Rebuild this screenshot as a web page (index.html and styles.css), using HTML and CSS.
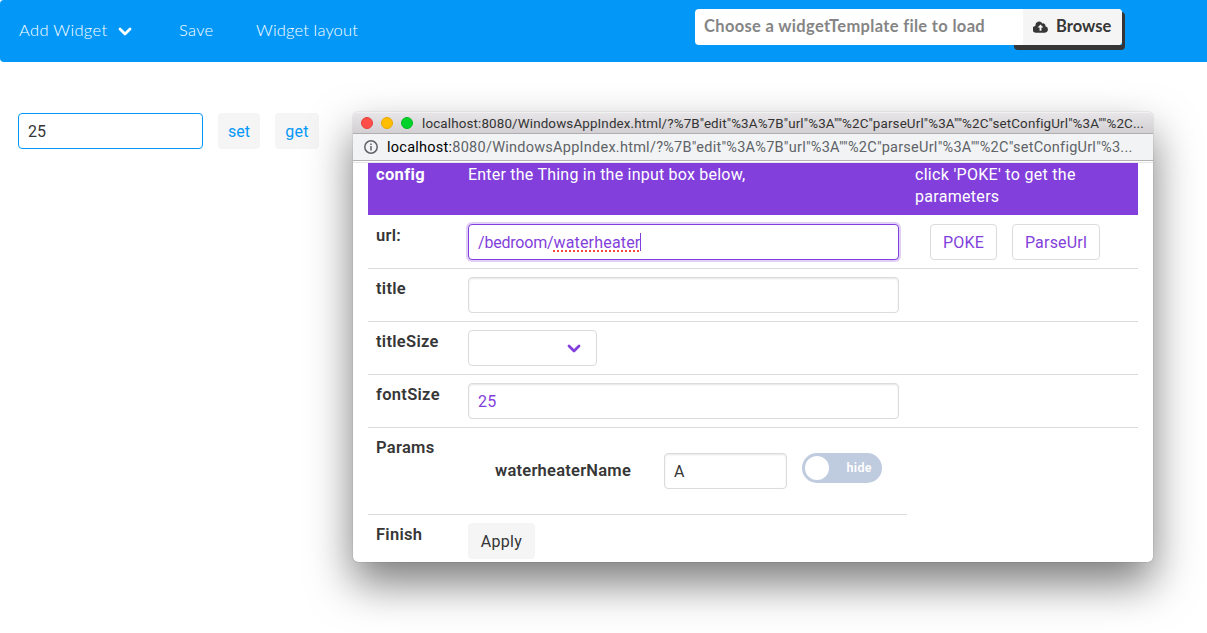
FILE: index.html
```html
<!DOCTYPE html>
<html lang="en">
<head>
<meta charset="utf-8">
<title>Widget layout</title>
<link rel="stylesheet" href="styles.css">
</head>
<body>
<nav class="navbar">
  <div class="menu">
    <a class="item add"><span>Add Widget</span><svg class="chevron" viewBox="0 0 14 9"><path d="M2 2l5 5 5-5"/></svg></a>
    <a class="item save">Save</a>
    <a class="item layout">Widget layout</a>
  </div>
  <div class="file">
    <span class="file-name">Choose a widgetTemplate file to load</span>
    <span class="file-cta">
      <svg class="cloud" viewBox="0 0 16 12"><path fill-rule="evenodd" d="M13.2 5.1A2.5 2.5 0 0 0 10 2.2 4 4 0 0 0 2.6 4.8 3.6 3.6 0 0 0 3.6 12H12.7A3.5 3.5 0 0 0 13.2 5.1ZM8 3.4L11.1 6.6H9V10H7V6.6H4.9Z"/></svg>
      <span class="browse">Browse</span>
    </span>
  </div>
</nav>
<main class="widget">
  <div class="input value">25</div>
  <div class="button set">set</div>
  <div class="button get">get</div>
</main>
<section class="window">
  <header class="titlebar">
    <i class="light red"></i><i class="light yellow"></i><i class="light green"></i>
    <span class="title">localhost:8080/WindowsAppIndex.html/?%7B"edit"%3A%7B"url"%3A""%2C"parseUrl"%3A""%2C"setConfigUrl"%3A""%2C...</span>
  </header>
  <div class="address">
    <svg class="info" viewBox="0 0 14 14"><circle cx="7" cy="7" r="6.2"/><path d="M7 6v4.4M7 3.4v1.6"/></svg>
    <span class="url"><b>localhost:</b>8080/WindowsAppIndex.html/?%7B"edit"%3A%7B"url"%3A""%2C"parseUrl"%3A""%2C"setConfigUrl"%3...</span>
  </div>
  <div class="form">
    <div class="row head"><strong>config</strong><span class="intro">Enter the Thing in the input box below,</span><span class="hint">click 'POKE' to get the<br>parameters</span></div>
    <div class="row"><strong>url:</strong><div class="cell"><div class="input focus"><span class="path">/bedroom/<span class="misspelt">waterheater</span></span><i class="caret"></i></div></div><div class="actions"><div class="button outline poke">POKE</div><div class="button outline parse">ParseUrl</div></div></div>
    <div class="row"><strong>title</strong><div class="cell"><div class="input"></div></div></div>
    <div class="row"><strong>titleSize</strong><div class="cell"><div class="select"><svg class="chevron" viewBox="0 0 14 9"><path d="M2 2l5 5 5-5"/></svg></div></div></div>
    <div class="row"><strong>fontSize</strong><div class="cell"><div class="input violet">25</div></div></div>
    <div class="row params"><strong>Params</strong><div class="param"><strong class="name">waterheaterName</strong><div class="input short">A</div><div class="switch"><i class="knob"></i><span>hide</span></div></div></div>
    <div class="row finish"><strong>Finish</strong><div class="cell"><div class="button apply">Apply</div></div></div>
  </div>
</section>
</body>
</html>
```
FILE: styles.css
```css
* { box-sizing: border-box; }
body { margin: 0; height: 633px; overflow: hidden; position: relative; background: #fff; color: #363636; font: 16px/24px Roboto, "Liberation Sans", sans-serif; }
.navbar { height: 62px; display: flex; align-items: flex-start; justify-content: space-between; padding: 0 85px 0 19px; background: #0398f7; border-radius: 4px 0 0 4px; font-family: Lato, sans-serif; }
.menu { display: flex; height: 60px; align-items: center; color: #fff; font-size: 16.5px; font-weight: 300; letter-spacing: .15px; }
.item { display: flex; align-items: center; white-space: nowrap; }
.add { width: 160px; gap: 11px; letter-spacing: .34px; }
.add .chevron { position: relative; top: 1px; }
.save { width: 77px; letter-spacing: .3px; }
.chevron { width: 14px; height: 9px; fill: none; stroke: currentColor; stroke-width: 2.8; stroke-linecap: round; stroke-linejoin: round; }
.file { display: flex; width: 427px; height: 36px; margin-top: 9px; border-radius: 4px; background: #fff; font-size: 16.5px; font-weight: 700; line-height: 34px; white-space: nowrap; }
.file-name { flex: 1; padding-left: 9px; color: #858585; letter-spacing: .33px; }
.file-cta { position: relative; display: flex; align-items: center; width: 99px; padding-left: 10px; gap: 8px; background: #f5f5f5; border-radius: 0 4px 4px 0; letter-spacing: .05px; }
.file-cta::before { content: ""; position: absolute; left: -9px; right: -3px; top: 3px; bottom: -5px; background: #363636; border-radius: 4px; clip-path: polygon(0 33px, 108px 33px, 108px 0, 111px 0, 111px 100%, 0 100%); }
.cloud { width: 15px; height: 12px; fill: #363636; }
.browse { color: #363636; padding-bottom: 2px; }
.widget { display: flex; gap: 15px; padding: 51px 18px; }
.input { height: 36px; border: 1px solid #dbdbdb; border-radius: 4px; padding: 0 9px; line-height: 35px; background: #fff; box-shadow: inset 0 1px 2px rgba(10,10,10,.1); white-space: nowrap; }
.value { width: 185px; border-color: #0398f7; box-shadow: none; }
.button { height: 36px; border-radius: 4px; background: #f5f5f5; line-height: 37px; text-align: center; }
.set { width: 42px; color: #0398f7; }
.get { width: 44px; color: #0398f7; letter-spacing: .3px; }
.window { position: absolute; left: 353px; top: 112px; width: 800px; height: 450px; background: #fff; border-radius: 5px; box-shadow: 0 0 1px rgba(0,0,0,.5), 0 21px 44px rgba(0,0,0,.52); }
.titlebar { display: flex; align-items: center; height: 22px; padding-left: 8px; gap: 8px; border-radius: 5px 5px 0 0; background: linear-gradient(#e8e5e8, #d3d0d3); border-bottom: 1px solid #afadaf; border-top: 1px solid #f2f1f2; }
.light { width: 12px; height: 12px; border-radius: 50%; border: 1px solid; flex: none; }
.red { background: #ff4e48; border-color: #e6403b; }
.yellow { background: #ffbe02; border-color: #e6a800; }
.green { background: #02d32a; border-color: #02ba22; }
.title { margin-left: 1px; padding-top: 2px; font-size: 13.4px; line-height: 20px; letter-spacing: .14px; color: #333; white-space: nowrap; }
.address { display: flex; align-items: center; height: 27px; padding-left: 11px; gap: 9px; background: #f1f3f4; border-bottom: 1px solid #b3b3b3; }
.info { width: 14px; height: 14px; fill: none; stroke: #5f6368; stroke-width: 1.5; flex: none; }
.url { padding-top: 2px; font-size: 14.5px; letter-spacing: .25px; color: #5f6368; white-space: nowrap; }
.url b { font-weight: 400; color: #000; }
.form { margin-top: 1px; border-top: 1px solid #e6e6e6; padding: 0 15px; }
.row { display: grid; grid-template-columns: 92px 447px 231px; height: 53px; border-bottom: 1px solid #dbdbdb; }
.row > strong { padding: 8px 0 0 8px; font-size: 16.5px; font-weight: 600; letter-spacing: .3px; }
.row > .cell { padding: 8px; }
.head { padding-top: 1px; border-bottom-color: #fff; background: #823fdb; background-clip: padding-box; color: #fff; line-height: 22px; }
.head > strong { padding-top: 0; font-weight: 700; letter-spacing: .35px; }
.intro, .hint { padding-left: 8px; white-space: nowrap; justify-self: start; letter-spacing: .22px; }
.hint { letter-spacing: .3px; }
.focus { border-color: #823fdb; box-shadow: 0 0 0 2px rgba(130,63,219,.25); color: #823fdb; display: flex; align-items: center; }
.path { padding-top: 2px; line-height: 18px; letter-spacing: -.2px; }
.misspelt { letter-spacing: .18px; text-decoration: underline dotted #f5483d 2px; text-underline-offset: 2px; text-decoration-skip-ink: none; }
.caret { width: 1px; height: 18px; background: #823fdb; }
.violet { color: #823fdb; letter-spacing: .3px; }
.actions { display: flex; gap: 15px; padding: 8px 0 0 23px; }
.outline { background: #fff; border: 1px solid #dbdbdb; color: #823fdb; line-height: 35px; }
.poke { width: 67px; letter-spacing: .2px; }
.parse { width: 88px; letter-spacing: .2px; }
.select { display: flex; align-items: center; justify-content: flex-end; width: 129px; height: 36px; padding-right: 15px; border: 1px solid #dbdbdb; border-radius: 4px; color: #823fdb; }
.params { width: 539px; grid-template-columns: 92px 447px; height: 87px; }
.param { display: flex; padding: 25px 0 0 35px; }
.name { width: 169px; line-height: 35px; font-size: 16.5px; font-weight: 600; letter-spacing: .24px; }
.short { width: 123px; }
.switch { display: flex; align-items: center; justify-content: space-between; width: 80px; height: 30px; margin-left: 15px; padding: 0 10px 0 3px; border-radius: 15px; background: #bfcbde; color: #fff; font-size: 12.5px; font-weight: 600; letter-spacing: .4px; }
.knob { width: 24px; height: 24px; border-radius: 50%; background: #fff; }
.finish { height: 47px; border: 0; }
.apply { width: 67px; letter-spacing: .3px; }
```
